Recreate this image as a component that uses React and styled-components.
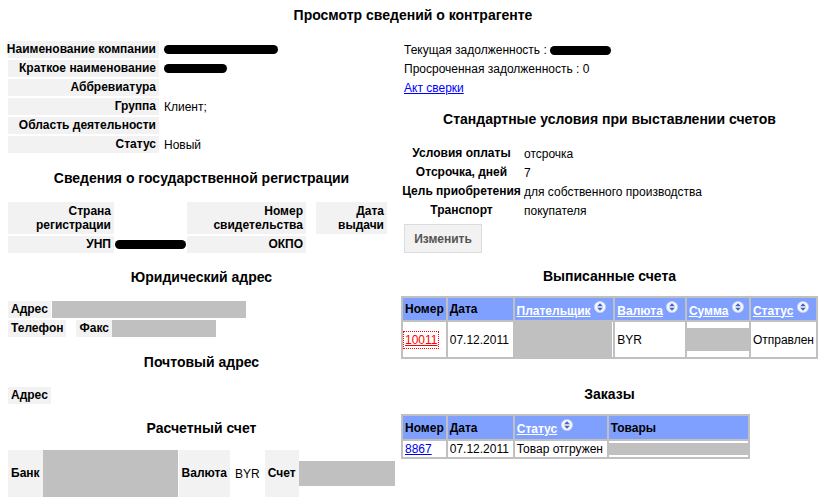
import React from 'react';
import styled, { createGlobalStyle } from 'styled-components';

const GlobalStyle = createGlobalStyle`
    body {
        margin: 0;
        background: #fff;
        color: #000;
        font-family: "Liberation Sans", Arial, sans-serif;
        font-size: 12px;
    }
`

const SortIcon = () => (
    <IconSvg width="12" height="12" viewBox="0 0 12 12">
        <circle cx="6" cy="6" r="5.6" fill="#f3f5fb" stroke="#c9d3ec" strokeWidth="0.6" />
        <path d="M6 2.3 L8.8 5.3 H3.2 Z" fill="#3f62c4" />
        <path d="M6 9.7 L8.8 6.7 H3.2 Z" fill="#3f62c4" />
    </IconSvg>
);

const SortLink = ({ children }) => (
    <>
        <HeadLink href="#">{children}</HeadLink> <SortIcon />
    </>
);

const App = () => {
    return (
        <Page>
            <GlobalStyle />
            <Title>Просмотр сведений о контрагенте</Title>
            <Columns>
                <Column>
                    <InfoGrid>
                        <Label>Наименование компании</Label>
                        <Value><Blob $w={114} /></Value>
                        <Label>Краткое наименование</Label>
                        <Value><Blob $w={63} /></Value>
                        <Label>Аббревиатура</Label>
                        <Value />
                        <Label>Группа</Label>
                        <Value>Клиент;</Value>
                        <Label>Область деятельности</Label>
                        <Value />
                        <Label>Статус</Label>
                        <Value>Новый</Value>
                    </InfoGrid>

                    <Heading $top={17} $bottom={16}>Сведения о государственной регистрации</Heading>
                    <RegGrid>
                        <Label $tall>Страна<br />регистрации</Label>
                        <Value />
                        <Label $tall>Номер<br />свидетельства</Label>
                        <Value />
                        <Label $tall>Дата<br />выдачи</Label>
                        <Label>УНП</Label>
                        <Value $pad={1}><Blob $w={75} /></Value>
                        <Label>ОКПО</Label>
                    </RegGrid>

                    <Heading $top={16} $bottom={16}>Юридический адрес</Heading>
                    <FieldRow>
                        <Label>Адрес</Label>
                        <Grey $w={194} $ml={1} />
                    </FieldRow>
                    <FieldRow>
                        <Label>Телефон</Label>
                        <Spacer />
                        <Label>Факс</Label>
                        <Grey $w={104} />
                    </FieldRow>

                    <Heading $top={15} $bottom={17}>Почтовый адрес</Heading>
                    <FieldRow>
                        <Label>Адрес</Label>
                    </FieldRow>

                    <Heading $top={14} $bottom={14}>Расчетный счет</Heading>
                    <BankRow>
                        <Label>Банк</Label>
                        <Grey $w={135} />
                        <Label $ml={1}>Валюта</Label>
                        <Value $pad={5}>BYR</Value>
                        <Label>Счет</Label>
                        <Grey $w={96} $h={25} />
                    </BankRow>
                </Column>

                <Column>
                    <Line>Текущая задолженность : <Blob $w={61} /></Line>
                    <Line>Просроченная задолженность : 0</Line>
                    <Line><TextLink href="#">Акт сверки</TextLink></Line>

                    <Heading $top={13} $bottom={17}>Стандартные условия при выставлении счетов</Heading>
                    <CondGrid>
                        <Label $plain $align="center">Условия оплаты</Label>
                        <Value $pad={0}>отсрочка</Value>
                        <Label $plain $align="center">Отсрочка, дней</Label>
                        <Value $pad={0}>7</Value>
                        <Label $plain $align="center">Цель приобретения</Label>
                        <Value $pad={0}>для собственного производства</Value>
                        <Label $plain $align="center">Транспорт</Label>
                        <Value $pad={0}>покупателя</Value>
                    </CondGrid>
                    <Button>Изменить</Button>

                    <Heading $top={15} $bottom={12}>Выписанные счета</Heading>
                    <DataTable>
                        <thead>
                            <tr>
                                <Th $w={44}>Номер</Th>
                                <Th $w={67}>Дата</Th>
                                <Th $w={101}><SortLink>Плательщик</SortLink></Th>
                                <Th $w={72}><SortLink>Валюта</SortLink></Th>
                                <Th $w={64}><SortLink>Сумма</SortLink></Th>
                                <Th $w={66}><SortLink>Статус</SortLink></Th>
                            </tr>
                        </thead>
                        <tbody>
                            <tr>
                                <Td $h={33}><RowLink href="#" $focused>10011</RowLink></Td>
                                <Td $h={33}>07.12.2011</Td>
                                <Td $h={33} $flush><Grey $w={99} $h={35} $ml={-2} /></Td>
                                <Td $h={33}>BYR</Td>
                                <Td $h={33} $flush><Grey $w={62} $h={23} /></Td>
                                <Td $h={33}>Отправлен</Td>
                            </tr>
                        </tbody>
                    </DataTable>

                    <Heading $top={27} $bottom={12}>Заказы</Heading>
                    <DataTable>
                        <thead>
                            <tr>
                                <Th $w={44} $h={23}>Номер</Th>
                                <Th $w={67} $h={23}>Дата</Th>
                                <Th $w={94} $h={23}><SortLink>Статус</SortLink></Th>
                                <Th $w={139} $h={23}>Товары</Th>
                            </tr>
                        </thead>
                        <tbody>
                            <tr>
                                <Td $h={16}><RowLink href="#">8867</RowLink></Td>
                                <Td $h={16}>07.12.2011</Td>
                                <Td $h={16}>Товар отгружен</Td>
                                <Td $h={16} $flush><Grey $w={139} $h={12} /></Td>
                            </tr>
                        </tbody>
                    </DataTable>
                </Column>
            </Columns>
        </Page>
    );
}

const Page = styled.div`
    width: 810px;
    padding: 0 8px;
`

const Title = styled.h1`
    margin: 7px 0 0;
    font-size: 14px;
    line-height: 16px;
    font-weight: bold;
    text-align: center;
`

const Columns = styled.div`
    display: grid;
    grid-template-columns: 387px 417px;
    column-gap: 6px;
    align-items: start;
    margin-top: 18px;
`

const Column = styled.div`
    display: flex;
    flex-direction: column;
    align-items: flex-start;
`

const Heading = styled.h2`
    align-self: stretch;
    margin: ${p => p.$top}px 0 ${p => p.$bottom}px;
    font-size: 14px;
    line-height: 16px;
    font-weight: bold;
    text-align: center;
`

const Label = styled.div`
    display: flex;
    align-items: center;
    justify-content: ${p => p.$align === 'center' ? 'center' : 'flex-end'};
    text-align: ${p => p.$align || 'right'};
    background: ${p => p.$plain ? 'transparent' : '#f2f2f2'};
    font-weight: bold;
    padding: ${p => p.$tall ? '2px 3px' : '0 3px'};
    line-height: ${p => p.$tall ? '14px' : '17px'};
    margin-left: ${p => p.$ml || 0}px;
    white-space: nowrap;
`

const Value = styled.div`
    display: flex;
    align-items: center;
    padding: 0 ${p => p.$pad ?? 5}px;
    white-space: nowrap;
`

const Blob = styled.span`
    display: inline-block;
    width: ${p => p.$w}px;
    height: 9px;
    background: #000;
    border-radius: 5px;
    vertical-align: -1px;
`

const Grey = styled.div`
    width: ${p => p.$w}px;
    height: ${p => p.$h ? `${p.$h}px` : 'auto'};
    align-self: ${p => p.$h ? 'center' : 'stretch'};
    margin-left: ${p => p.$ml || 0}px;
    background: #c0c0c0;
`

const InfoGrid = styled.div`
    display: grid;
    grid-template-columns: 151px auto;
    grid-auto-rows: 17px;
    row-gap: 2px;
`

const RegGrid = styled.div`
    display: grid;
    grid-template-columns: 106px 73px 119px 10px 71px;
    grid-template-rows: 32px 17px;
    row-gap: 2px;
`

const FieldRow = styled.div`
    display: flex;
    height: 17px;
    margin-bottom: 2px;
    &:last-of-type { margin-bottom: 0; }
`

const Spacer = styled.div`
    width: 10px;
`

const BankRow = styled.div`
    display: flex;
    height: 47px;
`

const Line = styled.div`
    padding-left: 3px;
    line-height: 19px;
`

const TextLink = styled.a`
    color: #0000ff;
    text-decoration: underline;
`

const CondGrid = styled.div`
    display: grid;
    grid-template-columns: 115px auto;
    grid-auto-rows: 19px;
    column-gap: 5px;
    padding-left: 3px;
`

const Button = styled.button`
    margin: 4px 0 0 3px;
    width: 78px;
    height: 29px;
    padding: 0;
    background: #f2f2f2;
    border: 1px solid #dcdcdc;
    color: #555;
    font-family: inherit;
    font-size: 12px;
    font-weight: bold;
`

const DataTable = styled.table`
    border-collapse: separate;
    border-spacing: 0;
    border: 1px solid #c0c0c0;
    table-layout: fixed;
`

const Th = styled.th`
    box-sizing: border-box;
    width: ${p => p.$w}px;
    height: ${p => (p.$h || 22) + 2}px;
    padding: 0 2px;
    border: 1px solid #c0c0c0;
    background: #80a0ff;
    text-align: left;
    vertical-align: middle;
    font-weight: bold;
    white-space: nowrap;
`

const Td = styled.td`
    height: ${p => p.$h}px;
    padding: ${p => p.$flush ? '0' : '0 2px'};
    border: 1px solid #c0c0c0;
    vertical-align: middle;
    white-space: nowrap;
    overflow: visible;
`

const HeadLink = styled.a`
    color: #fff;
    text-decoration: underline;
`

const IconSvg = styled.svg`
    vertical-align: 2px;
`

const RowLink = styled.a`
    color: ${p => p.$focused ? '#ff0000' : '#0000ee'};
    text-decoration: underline;
    outline: ${p => p.$focused ? '1px dotted #ff0000' : 'none'};
    outline-offset: 1px;
`

export default App;
